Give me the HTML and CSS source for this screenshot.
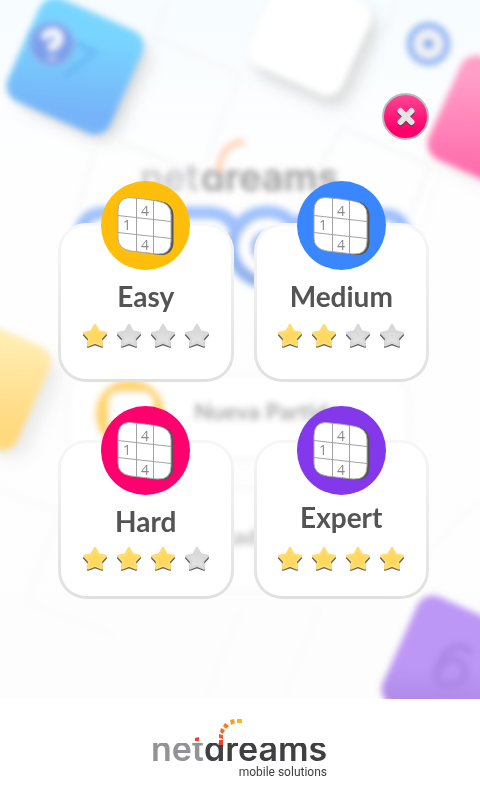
FILE: index.html
```html
<!DOCTYPE html>
<html lang="en">
<head>
<meta charset="utf-8">
<meta name="viewport" content="width=device-width, initial-scale=1">
<title>Sudoku – Difficulty</title>
<link rel="stylesheet" href="styles.css">
</head>
<body>
<svg class="backdrop" viewBox="0 0 480 800" preserveAspectRatio="xMidYMin slice" aria-hidden="true">
  <defs>
    <linearGradient id="sky" x1="0" y1="0" x2="0" y2="1"><stop offset="0" stop-color="#f7fcff"/><stop offset=".2" stop-color="#fefefe"/><stop offset="1" stop-color="#fdfdfd"/></linearGradient>
    <linearGradient id="blue" x1="0" y1="0" x2=".35" y2="1"><stop offset=".35" stop-color="#78d5ff"/><stop offset="1" stop-color="#76b3f8"/></linearGradient>
    <linearGradient id="pink" x1="0" y1="0" x2=".4" y2="1"><stop offset=".2" stop-color="#ff9fc8"/><stop offset="1" stop-color="#ff6cab"/></linearGradient>
    <linearGradient id="gold" x1="0" y1="0" x2=".4" y2="1"><stop offset=".1" stop-color="#fff0ba"/><stop offset="1" stop-color="#ffd97c"/></linearGradient>
    <linearGradient id="violet" x1="0" y1="0" x2=".4" y2="1"><stop offset=".6" stop-color="#bd97f6"/><stop offset="1" stop-color="#a985df"/></linearGradient>
    <linearGradient id="ink" gradientUnits="userSpaceOnUse" x1="0" y1="205" x2="0" y2="290"><stop offset="0" stop-color="#a2c4ff"/><stop offset="1" stop-color="#8fb0ea"/></linearGradient>
    <filter id="soft" x="-20%" y="-20%" width="140%" height="140%"><feGaussianBlur stdDeviation="3"/></filter>
    <filter id="shade" x="-40%" y="-40%" width="180%" height="180%"><feGaussianBlur stdDeviation="8"/></filter>
  </defs>
  <rect width="480" height="800" fill="url(#sky)"/>
  <g fill="none" stroke="#f5f6f7" stroke-width="3" filter="url(#soft)">
    <path d="M168 0l-14 38 86 36-34 86M95 150l-18 60M120 142l70 28M340 130l-20 38M340 126l90 40-22 54M396 0l-10 32"/>
  </g>
  <g fill="none" stroke="#fafafa" stroke-width="3" filter="url(#soft)">
    <path d="M440 170l-34 120M0 490l60 22 40-90M60 512l-34 90 90 34M240 610l-34 90M320 606l-36 90M480 500l-60 60"/>
  </g>
  <g filter="url(#shade)" fill="#bdbdbd" opacity=".55">
    <rect x="-53" y="-53" width="106" height="106" rx="18" transform="translate(84 76) rotate(24)"/>
    <rect x="-50" y="-50" width="100" height="100" rx="18" transform="translate(317 46) rotate(24)"/>
    <rect x="-53" y="-53" width="106" height="106" rx="18" transform="translate(503 134) rotate(24)" opacity=".5"/>
    <rect x="-53" y="-53" width="106" height="106" rx="18" transform="translate(-5 394) rotate(24)" opacity=".5"/>
  </g>
  <g filter="url(#soft)">
    <rect x="-56" y="-56" width="112" height="112" rx="17" fill="url(#blue)" transform="translate(75 66) rotate(24)"/>
    <rect x="-51" y="-51" width="102" height="102" rx="17" fill="#fff" transform="translate(310 34) rotate(24)"/>
    <rect x="-56" y="-56" width="112" height="112" rx="17" fill="url(#pink)" transform="translate(496 124) rotate(24)"/>
    <rect x="-56" y="-56" width="112" height="112" rx="17" fill="url(#gold)" transform="translate(-18 382) rotate(24)"/>
    <rect x="-59" y="-59" width="118" height="118" rx="17" fill="url(#violet)" transform="translate(454 668) rotate(24)"/>
  </g>
  <g filter="url(#soft)">
    <path d="M75 43l20 9-31 25" fill="none" stroke="#68b4f2" stroke-width="4"/>
    <path d="M471 654c-5-10-19-10-28 2-12 19-8 30 9 30 16-2 18-24 2-27q-10 0-16 13" fill="none" stroke="#ad87e6" stroke-width="7"/>
    <circle cx="52" cy="44" r="22" fill="#7b9fea" stroke="#9cbdf0" stroke-width="2"/>
    <path d="M45 39c1-9 14-9 14-1q0 5-7 9v3M52 57v2" fill="none" stroke="#f6f8fd" stroke-width="8"/>
    <circle cx="428.500" cy="44" r="22" fill="#94b8f3"/>
    <circle cx="428.500" cy="44" r="10" fill="#6c9ce8" stroke="#f0f2f6" stroke-width="10"/>
  </g>
  <g filter="url(#soft)" font-family="Inter, sans-serif" font-weight="600" font-size="38">
    <text x="140" y="191" fill="#c4c4c8">net</text>
    <text x="201" y="191" fill="#9a9a9c">ɑreams</text>
    <path d="M219 172c0-20 10-29 25-30" fill="none" stroke="#ffcaa6" stroke-width="5"/>
  </g>
  <g filter="url(#soft)">
    <path d="M80 236q2-23 25-23h103q22 0 28 19 11-17 32-17 18 0 27 12 10-12 24-12h66q18 0 20 20" fill="#fff" stroke="url(#ink)" stroke-width="13"/>
    <circle cx="267" cy="247" r="35" fill="#fff" stroke="url(#ink)" stroke-width="13"/>
    <circle cx="267" cy="247" r="12" fill="#fff" stroke="url(#ink)" stroke-width="9"/>
    <rect x="68" y="375" width="340" height="84" rx="22" fill="#fff" stroke="#f7f7f7" stroke-width="3"/>
    <rect x="68" y="490" width="340" height="100" rx="22" fill="#fff" stroke="#f7f7f7" stroke-width="3"/>
    <circle cx="130" cy="414" r="35" fill="#ffd56a"/>
    <rect x="109" y="392" width="44" height="44" rx="9" fill="#fff"/>
    <g font-family="Lato, sans-serif" font-weight="700" font-size="23" fill="#9c9c9c">
      <text x="194" y="420">Nueva Partida</text>
      <text x="201" y="545" opacity=".8">Estadísticas</text>
    </g>
  </g>
</svg>

<svg class="sprites" aria-hidden="true">
  <defs>
    <linearGradient id="silver" x1="0" y1="0" x2="0" y2="1"><stop offset="0" stop-color="#d4d4d4"/><stop offset="1" stop-color="#e6e6e6"/></linearGradient>
    <symbol id="star" viewBox="0 0 26 26">
      <path d="M13 5l3.400 6.200 7.600.8-5 5.500 1 6.300-7-2.600-7 2.600 1-6.300-5-5.500 7.600-.8z" fill="#606060" stroke="#606060" stroke-width="2" stroke-linejoin="round"/>
      <path d="M13 2l3.500 6.400 7.300 1.500-5 5.500 1 7L13 19.600l-6.800 2.800 1-7-5-5.500 7.300-1.500z" stroke-width="2.500" stroke-linejoin="round"/>
    </symbol>
    <symbol id="board" viewBox="0 0 89 89">
      <path d="M29 17l27 2.500q16.500 2 16.500 15.500v27q-1 13-14.500 12l-27-4z" fill="#555"/>
      <path d="M28 16.500l15 1.500 13 2q14 2 14 14v26q0 14-14 13l-26-3q-13-2-13-13V30q0-13 11-13.500z" fill="#fff" stroke="#aaa" stroke-width="1"/>
      <path d="M35.500 17v54M52.500 19v54M17 34.500l53 6M17 51.500l53 6" fill="none" stroke="#a2a2a2" stroke-width="1"/>
      <g font-family="Open Sans, sans-serif" font-size="14" fill="#8a8a8a" text-anchor="middle">
        <text x="44" y="35">4</text><text x="26" y="49">1</text><text x="44" y="69">4</text>
      </g>
    </symbol>
  </defs>
</svg>

<main class="dialog">
  <button class="close" type="button" aria-label="Close">
    <svg viewBox="0 0 24 24" fill="none" stroke-linecap="round" stroke-width="6">
      <path d="M6.500 7.500l11 11m0-11l-11 11" stroke="#6b3b50"/>
      <path d="M6.500 6l11 11m0-11l-11 11" stroke="#e4e4e4"/>
    </svg>
  </button>
  <div class="levels">
    <button class="level easy" type="button">
      <svg class="icon" aria-hidden="true"><use href="#board"/></svg>
      <span class="name">Easy</span>
      <span class="stars"><svg class="on"><use href="#star"/></svg><svg><use href="#star"/></svg><svg><use href="#star"/></svg><svg><use href="#star"/></svg></span>
    </button>
    <button class="level medium" type="button">
      <svg class="icon" aria-hidden="true"><use href="#board"/></svg>
      <span class="name">Medium</span>
      <span class="stars"><svg class="on"><use href="#star"/></svg><svg class="on"><use href="#star"/></svg><svg><use href="#star"/></svg><svg><use href="#star"/></svg></span>
    </button>
    <button class="level lower hard" type="button">
      <svg class="icon" aria-hidden="true"><use href="#board"/></svg>
      <span class="name">Hard</span>
      <span class="stars"><svg class="on"><use href="#star"/></svg><svg class="on"><use href="#star"/></svg><svg class="on"><use href="#star"/></svg><svg><use href="#star"/></svg></span>
    </button>
    <button class="level lower expert" type="button">
      <svg class="icon" aria-hidden="true"><use href="#board"/></svg>
      <span class="name">Expert</span>
      <span class="stars"><svg class="on"><use href="#star"/></svg><svg class="on"><use href="#star"/></svg><svg class="on"><use href="#star"/></svg><svg class="on"><use href="#star"/></svg></span>
    </button>
  </div>
</main>

<footer class="sponsor">
  <svg class="logo" viewBox="0 0 180 64" role="img" aria-label="netdreams mobile solutions">
    <clipPath id="low"><rect y="26" width="180" height="30"/></clipPath>
    <g clip-path="url(#low)" font-family="Inter, sans-serif" font-size="34">
      <text x="1" y="44" font-weight="600" fill="#929297">net</text>
      <text x="54" y="44" font-weight="600" fill="#404042">dreams</text>
    </g>
    <path d="M45 21l4-1v4h-4z" fill="#f04030"/>
    <path d="M69 23h4v5h-4z" fill="#f43c2c"/>
    <path d="M69 17l4 1v4l-4-1z" fill="#f05a2a"/>
    <path d="M71 11l4 2-2 4-3-2z" fill="#f26a28"/>
    <path d="M75 6l4 3-3 3-3-3z" fill="#f47c26"/>
    <path d="M80 3l4-1 1 4-4 2z" fill="#f99a22"/>
    <path d="M87 2h5v4h-5z" fill="#fdb41e"/>
    <text x="177" y="59" text-anchor="end" font-family="Roboto, sans-serif" font-size="12" fill="#404042">mobile solutions</text>
  </svg>
</footer>
</body>
</html>
```

FILE: styles.css
```css
* { box-sizing: border-box; }

body {
  margin: 0;
  min-height: 100vh;
  display: flex;
  flex-direction: column;
  position: relative;
  overflow-x: hidden;
  background: #fdfdfd;
  font-family: Lato, "Open Sans", sans-serif;
}

.backdrop {
  position: absolute;
  inset: 0;
  width: 100%;
  height: 100%;
  z-index: -1;
}

.sprites { position: absolute; width: 0; height: 0; }

.dialog {
  flex: 1;
  display: flex;
  flex-direction: column;
  padding: 93px 51px 40px 58px;
}

.close {
  align-self: flex-end;
  width: 47px;
  height: 47px;
  padding: 0;
  display: grid;
  place-items: center;
  border: 2px solid #bdb9bb;
  border-radius: 50%;
  background: linear-gradient(#ff4596, #ff006a 80%);
  cursor: pointer;
}

.close svg { width: 24px; height: 24px; }

.levels {
  display: grid;
  grid-template-columns: 1fr 1fr;
  gap: 58px 20px;
  margin-top: 83px;
}

.level {
  display: flex;
  flex-direction: column;
  align-items: center;
  justify-content: flex-start;
  padding: 0 0 30px;
  border: 3px solid transparent;
  border-radius: 28px;
  background:
    linear-gradient(#fff, #fff) padding-box,
    linear-gradient(#f7f7f7, #e0e0e0) border-box;
  font: inherit;
  cursor: pointer;
}

.icon {
  width: 89px;
  height: 89px;
  margin-top: -45px;
  border-radius: 50%;
}

.name {
  margin-top: 10px;
  font-size: 28px;
  font-weight: 700;
  line-height: 32px;
  color: #545454;
}

.stars { display: flex; gap: 8px; margin-top: 11px; }
.stars svg { width: 26px; height: 26px; fill: url(#silver); stroke: #d8d8d8; }
.stars .on { fill: #ffd95f; stroke: #ffdc70; }

.lower { padding-bottom: 24px; }
.lower .icon { margin-top: -37px; }
.lower .stars { margin-top: 9px; }

.easy .icon { background: #ffbe0b; }
.medium .icon { background: #3a86ff; }
.hard .icon { background: #ff006e; }
.expert .icon { background: #8338ec; }
.expert .name { margin-top: 6px; }
.expert .stars { margin-top: 13px; }

.sponsor {
  display: flex;
  justify-content: center;
  padding: 18px 0 19px;
  background: #fff;
}

.logo { width: 180px; height: 64px; }
```
